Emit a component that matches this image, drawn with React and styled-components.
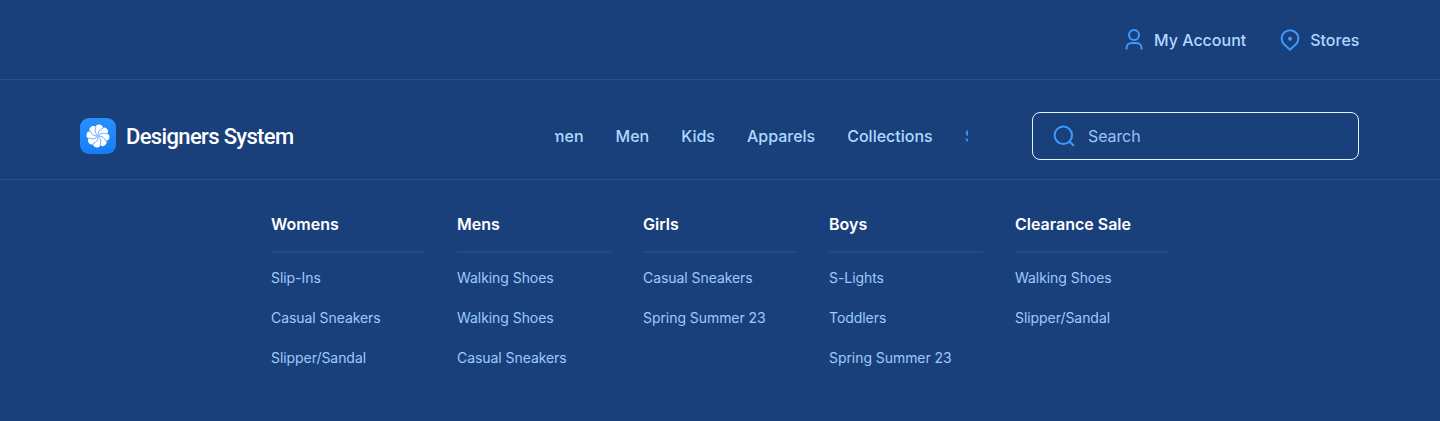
import React from "react";
import styled, { createGlobalStyle } from "styled-components";

const GlobalStyle = createGlobalStyle`
  * { box-sizing: border-box; }
  body { margin: 0; background: #1a407c; font-family: Inter, "Liberation Sans", sans-serif; }
`;

const Page = styled.div`
  min-height: 421px;
  background: #1a407c;
`;

const TopBar = styled.div`
  display: flex;
  justify-content: flex-end;
  align-items: center;
  gap: 32px;
  height: 80px;
  padding: 0 80.6px 0 80px;
  border-bottom: 1px solid #24509a;
`;

const TopLink = styled.a`
  display: flex;
  align-items: center;
  gap: 8px;
  color: #addaff;
  font-size: 16px;
  font-weight: 500;
  line-height: 24px;
`;

const Header = styled.header`
  display: flex;
  align-items: center;
  height: 100px;
  padding: 12px 81px 0 80px;
  border-bottom: 1px solid #24509a;
`;

const Brand = styled.div`
  display: flex;
  align-items: center;
  gap: 10px;
  width: 475px;
  color: #fff;
  font-family: Roboto, sans-serif;
  font-size: 22px;
  font-weight: 500;
  line-height: 28px;
  letter-spacing: -0.65px;
`;

const BrandName = styled.span`
  padding-top: 2px;
`;

const Nav = styled.nav`
  width: 413px;
  overflow: hidden;
`;

const NavTrack = styled.div`
  display: flex;
  gap: 32px;
  width: max-content;
  margin-left: -29.6px;
`;

const NavItem = styled.a`
  color: ${(p) => (p.$accent ? "#3d9bff" : "#addaff")};
  font-size: 16px;
  font-weight: 500;
  line-height: 24px;
`;

const SearchBox = styled.div`
  display: flex;
  align-items: center;
  gap: 12px;
  width: 327px;
  height: 48px;
  margin-left: auto;
  padding: 0 19px;
  border: 1px solid #e4f1ff;
  border-radius: 8px;
  color: #98c4f6;
  font-size: 16px;
  font-weight: 400;
  line-height: 24px;
  letter-spacing: -0.1px;
`;

const Menu = styled.div`
  display: grid;
  grid-template-columns: repeat(5, 154px);
  column-gap: 32px;
  padding: 32px 0 0 271px;
`;

const Column = styled.section`
  display: flex;
  flex-direction: column;
  gap: 16px;
`;

const ColumnTitle = styled.h2`
  margin: 0 0 -3px;
  padding-bottom: 15px;
  border-bottom: 2px solid #204a88;
  color: #fff;
  font-size: 16px;
  font-weight: 600;
  line-height: 24px;
`;

const MenuLink = styled.a`
  color: #9ccaf9;
  font-size: 14px;
  font-weight: 400;
  line-height: 24px;
  letter-spacing: -0.06px;
  white-space: nowrap;
`;

const Icon = styled.svg`
  flex: none;
  width: 24px;
  height: 24px;
  fill: none;
  stroke: #3d9bff;
  stroke-width: 2;
`;

const LogoMark = styled.svg`
  flex: none;
  width: 36px;
  height: 36px;
`;

const navItems = ["Women", "Men", "Kids", "Apparels", "Collections"];

const columns = [
  { title: "Womens", links: ["Slip-Ins", "Casual Sneakers", "Slipper/Sandal"] },
  { title: "Mens", links: ["Walking Shoes", "Walking Shoes", "Casual Sneakers"] },
  { title: "Girls", links: ["Casual Sneakers", "Spring Summer 23"] },
  { title: "Boys", links: ["S-Lights", "Toddlers", "Spring Summer 23"] },
  { title: "Clearance Sale", links: ["Walking Shoes", "Slipper/Sandal"] },
];

const petals = [0, 45, 90, 135, 180, 225, 270, 315];

function Logo() {
  return (
    <LogoMark viewBox="0 0 36 36">
      <defs>
        <linearGradient id="tile" x1="0" y1="0" x2="0" y2="1">
          <stop offset="0" stopColor="#2a90ff" />
          <stop offset="1" stopColor="#187df5" />
        </linearGradient>
      </defs>
      <rect width="36" height="36" rx="9" fill="url(#tile)" />
      <circle cx="18" cy="18" r="8.8" fill="#fff" />
      {petals.map((a) => (
        <circle key={a} transform={`rotate(${a + 8} 18 18)`} cx="18" cy="10.2" r="3.7" fill="#fff" />
      ))}
      {petals.map((a) => (
        <path
          key={a}
          transform={`rotate(${a + 8} 18 18)`}
          d="M17.6 17.6Q13.2 14.8 14.8 9"
          fill="none"
          stroke="#2085fb"
          strokeWidth="0.6"
        />
      ))}
    </LogoMark>
  );
}

export default function App() {
  return (
    <Page>
      <GlobalStyle />
      <TopBar>
        <TopLink>
          <Icon viewBox="0 0 24 24">
            <circle cx="12" cy="7" r="5" />
            <path d="M4.5 21.5V20a5 5 0 0 1 5-5h5a5 5 0 0 1 5 5v1.5" />
          </Icon>
          My Account
        </TopLink>
        <TopLink>
          <Icon viewBox="0 0 24 24">
            <path d="M12 21.7L5.8 16A8.3 8.3 0 1 1 18.2 16Z" />
            <circle cx="12" cy="10.8" r="1" />
          </Icon>
          Stores
        </TopLink>
      </TopBar>
      <Header>
        <Brand>
          <Logo />
          <BrandName>Designers System</BrandName>
        </Brand>
        <Nav>
          <NavTrack>
            {navItems.map((item) => (
              <NavItem key={item}>{item}</NavItem>
            ))}
            <NavItem $accent>Sale</NavItem>
          </NavTrack>
        </Nav>
        <SearchBox>
          <Icon viewBox="0 0 24 24">
            <circle cx="11.3" cy="11.3" r="8.7" />
            <path d="M17.4 17.4l4.6 4.6" />
          </Icon>
          Search
        </SearchBox>
      </Header>
      <Menu>
        {columns.map((column) => (
          <Column key={column.title}>
            <ColumnTitle>{column.title}</ColumnTitle>
            {column.links.map((link, i) => (
              <MenuLink key={i}>{link}</MenuLink>
            ))}
          </Column>
        ))}
      </Menu>
    </Page>
  );
}
